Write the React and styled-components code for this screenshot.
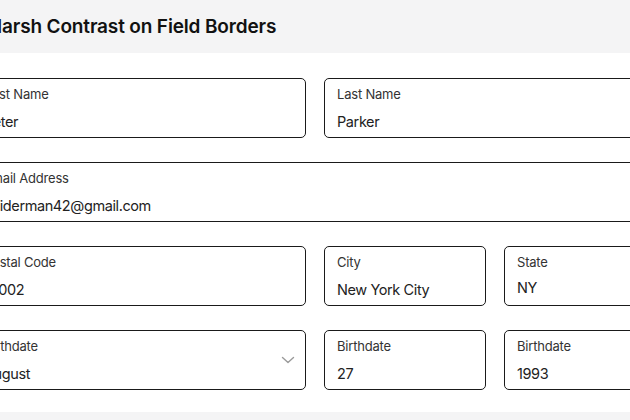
import React from "react";
import styled, { createGlobalStyle } from "styled-components";

const GlobalStyle = createGlobalStyle`
  html, body {
    margin: 0;
    padding: 0;
    background: #ffffff;
    overflow: hidden;
  }
  body {
    font-family: Inter, "Noto Sans", sans-serif;
    color: #1c1c1c;
  }
`;

const Page = styled.div`
  width: 760px;
  margin-left: -29px;
  display: flex;
  flex-direction: column;
`;

const Header = styled.header`
  height: 53px;
  background: #f4f4f5;
  display: flex;
  align-items: center;
  margin-left: -40px;
  padding-left: 57px;
`;

const Title = styled.h1`
  margin: 0;
  font-size: 19px;
  font-weight: 600;
  letter-spacing: -0.15px;
  color: #111;
`;

const Form = styled.form`
  display: grid;
  grid-template-columns: 335px 162px 162px;
  column-gap: 18px;
  row-gap: 24px;
  padding: 25px 0 22px;
`;

const Field = styled.label`
  box-sizing: border-box;
  grid-column: span ${(p) => p.$span || 1};
  height: 60px;
  border: 1px solid #1a1a1a;
  border-radius: 5px;
  padding: 7px 12px 0;
  display: flex;
  align-items: flex-start;
  justify-content: space-between;
`;

const Stack = styled.div`
  display: flex;
  flex-direction: column;
  gap: ${(p) => (p.$select ? "8px" : "10px")};
`;

const Label = styled.span`
  font-size: 13px;
  line-height: 16px;
  letter-spacing: -0.2px;
  color: #333;
`;

const Value = styled.span`
  font-size: 14.5px;
  line-height: 20px;
  letter-spacing: -0.4px;
  color: #222;
`;

const Chevron = styled.svg`
  align-self: center;
  width: 14px;
  height: 8px;
  margin-right: -2px;
  margin-top: -7px;
`;

const Footer = styled.div`
  height: 20px;
  background: #f4f4f5;
  margin-left: -40px;
`;

const TextField = ({ label, value, span, select, arrow }) => (
  <Field $span={span}>
    <Stack $select={select}>
      <Label>{label}</Label>
      <Value>{value}</Value>
    </Stack>
    {arrow && (
      <Chevron viewBox="0 0 14 8">
        <path
          d="M1.5 1.5 L7 6.5 L12.5 1.5"
          fill="none"
          stroke="#9a9a9a"
          strokeWidth="1.4"
          strokeLinecap="round"
          strokeLinejoin="round"
        />
      </Chevron>
    )}
  </Field>
);

export default function App() {
  return (
    <Page>
      <GlobalStyle />
      <Header>
        <Title>Harsh Contrast on Field Borders</Title>
      </Header>
      <Form>
        <TextField label="First Name" value="Peter" />
        <TextField label="Last Name" value="Parker" span={2} />
        <TextField label="Email Address" value="spiderman42@gmail.com" span={3} />
        <TextField label="Postal Code" value="10002" />
        <TextField label="City" value="New York City" />
        <TextField label="State" value="NY" select />
        <TextField label="Birthdate" value="August" arrow />
        <TextField label="Birthdate" value="27" />
        <TextField label="Birthdate" value="1993" />
      </Form>
      <Footer />
    </Page>
  );
}
